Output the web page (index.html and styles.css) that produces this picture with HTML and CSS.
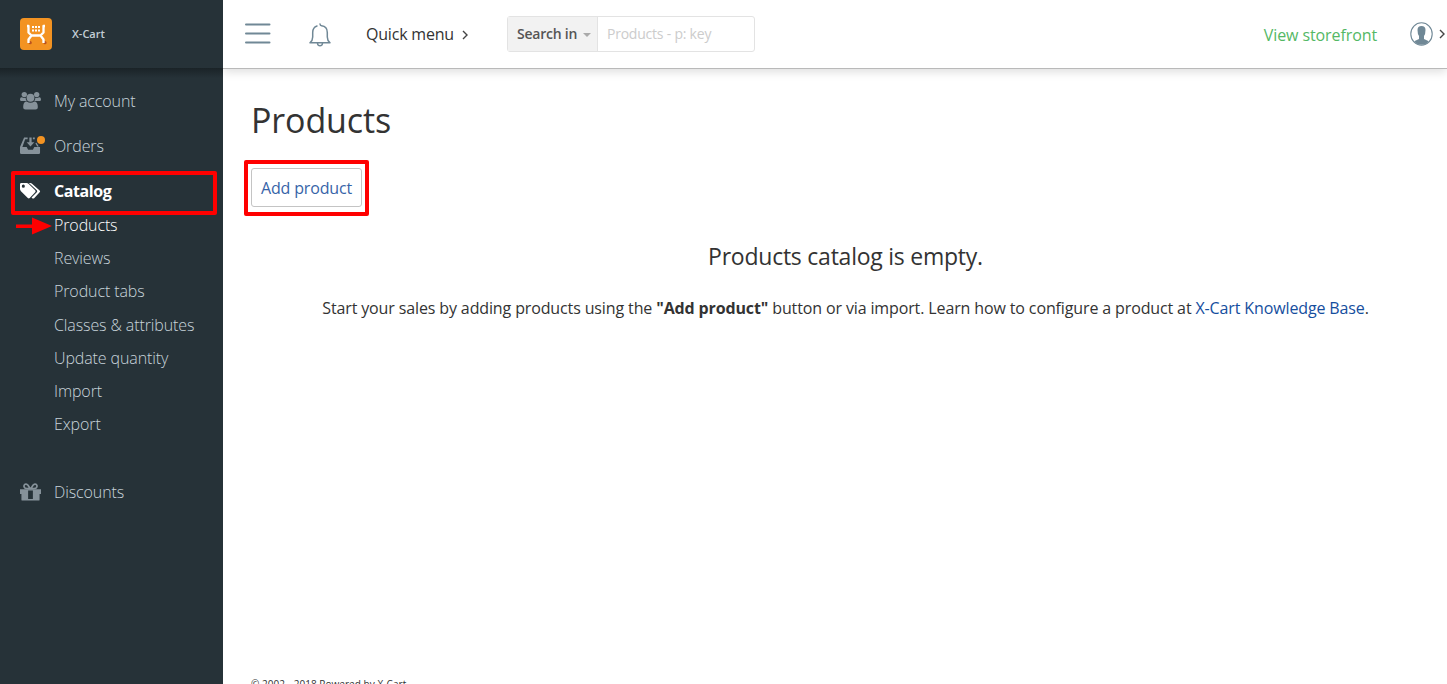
FILE: index.html
```html
<!DOCTYPE html>
<html lang="en">
<head>
<meta charset="utf-8">
<title>Products</title>
<link rel="stylesheet" href="styles.css">
</head>
<body>
<div class="app">
  <aside class="sidebar">
    <div class="brand">
      <svg class="logo" width="32" height="32" viewBox="0 0 32 32">
        <rect width="32" height="32" rx="4" fill="#f39322"/>
        <circle cx="10.200" cy="24.700" r="1.600" fill="#b9531f"/><circle cx="25" cy="24.700" r="1.600" fill="#b9531f"/>
        <path d="M7 8h1.500v6.500l3 3h9l3-3V8H25M8.500 25v-3.500l3-4h9l3 4V25" fill="none" stroke="#fff" stroke-width="2.300" stroke-linejoin="round"/>
        <path d="M12 8h2v2h-2zM15 8h2v2h-2zM18 8h2v2h-2zM12 11.500h2v2h-2zM15 11.500h2v2h-2zM18 11.500h2v2h-2z" fill="#fff"/>
      </svg>
      <span class="brand-name">X-Cart</span>
    </div>
    <nav class="nav">
      <a class="nav-item">
        <svg class="nav-icon" width="21" height="20" viewBox="0 0 22 20" fill="currentColor">
          <circle cx="4.500" cy="3.300" r="2.800"/><circle cx="17.500" cy="3.300" r="2.800"/>
          <path d="M0 8.500Q0 6 2 6.200Q4 7.200 6 6.500Q5.800 8.500 7 10H1Q0 10 0 8.500zM22 8.500Q22 6 20 6.200Q18 7.200 16 6.500Q16.200 8.500 15 10h6Q22 10 22 8.500z"/>
          <circle cx="11" cy="6.600" r="4.100"/>
          <path d="M3.300 16.500Q3.300 10.500 7 10.500Q11 13 15 10.500Q18.700 10.500 18.700 16.500Q18.700 19 16.300 19H5.700Q3.300 19 3.300 16.500z"/>
        </svg><span>My account</span></a>
      <a class="nav-item">
        <svg class="nav-icon" width="21" height="20" viewBox="0 0 22 20" fill="currentColor">
          <path d="M4.300 1.200H8v1.600H5.400L2.500 11H7l1.500 3h5l1.500-3h6v6q0 1.400-1.400 1.400H1.400Q0 18.400 0 17v-6z"/>
          <path d="M9.800 1h2.400v5H15l-4 4.500L7 6h2.800zM13.500 1.200h2V3h-2zM17.300 6.500l2.400 4h-1.600l-2-3.500z"/>
        </svg><i class="dot"></i><span>Orders</span></a>
      <a class="nav-item current">
        <svg class="nav-icon" width="21" height="20" viewBox="0 0 22 20" fill="currentColor">
          <path fill-rule="evenodd" d="M1.500 1.500H7q1 0 1.900.8l7 7q1 1 0 2l-5.700 6.100q-1 1-2 0l-7.200-7.200Q0 9.200 0 8V3q0-1.500 1.500-1.500zM3.500 3.300a1.600 1.600 0 1 0 0 3.200a1.600 1.600 0 0 0 0-3.200z"/>
          <path d="M9.300 1.500h1.500q1 0 1.800.8l8 7.100q1 1 0 2l-5.800 6.100q-.9.900-2 .1l-.7-.7l5.500-5.700q1-1.100 0-2.100z"/>
        </svg><span>Catalog</span></a>
      <div class="subnav">
        <a class="active">Products</a>
        <a>Reviews</a><a>Product tabs</a><a>Classes &amp; attributes</a><a>Update quantity</a><a>Import</a><a>Export</a>
      </div>
      <a class="nav-item">
        <svg class="nav-icon" width="21" height="20" viewBox="0 0 22 20" fill="currentColor">
          <path fill-rule="evenodd" d="M0 7h22v5h-1.500v6q0 1-1 1h-17q-1 0-1-1v-6H0zM8.500 8.300v9h5v-9z"/>
          <path d="M10.700 6.500L8.400 3Q7 1 5.200 2Q3.200 3.500 5 5.600Q6 6.500 10.700 6.500zM11.300 6.500L13.600 3Q15 1 16.800 2Q18.800 3.500 17 5.600Q16 6.500 11.300 6.500z" fill="none" stroke="currentColor" stroke-width="1.800"/>
        </svg><span>Discounts</span></a>
    </nav>
    <div class="mark mark-catalog"></div>
    <svg class="pointer" width="36" height="18" viewBox="0 0 36 18"><path d="M0 7.500h16V.5L36 9L16 17.500v-6.500H0z" fill="#f00"/></svg>
  </aside>
  <div class="page">
    <header class="topbar">
      <svg class="burger" width="26" height="22" viewBox="0 0 26 22"><path d="M1 1.500h23.500M1 10.500h23.500M1 19.500h23.500" stroke="#708896" stroke-width="2" stroke-linecap="round"/></svg>
      <svg class="bell" width="22" height="24" viewBox="0 0 22 24" fill="none" stroke="#708896" stroke-width="1.500" stroke-linecap="round" stroke-linejoin="round">
        <path d="M8 3Q3.700 4.500 3.700 9.500V14Q3.700 17.500 1 19.800H21Q18.300 17.500 18.300 14V9.500Q18.300 3.500 12.500 2.800Q11.200 2.700 11 1M8.500 20.500Q8.800 22.700 11 22.700Q13.200 22.700 13.500 20.500"/>
      </svg>
      <a class="quick">Quick menu</a>
      <svg class="chev" width="6" height="10" viewBox="0 0 6 10"><path d="M1 1l4 4l-4 4" fill="none" stroke="#444" stroke-width="1.400"/></svg>
      <div class="search">
        <div class="search-in"><span>Search in</span><i class="caret"></i></div>
        <div class="search-field">Products - p: key</div>
      </div>
      <a class="storefront">View storefront</a>
      <svg class="avatar" width="23" height="24" viewBox="0 0 23 24">
        <ellipse cx="11.500" cy="12" rx="10.700" ry="11.200" fill="#fff" stroke="#708896" stroke-width="1.100"/>
        <path d="M11.500 4Q15.500 4 15.500 8Q15.500 12 14 14V17L18.800 19.300Q16 22.800 11.500 22.800Q7 22.800 4.200 19.300L9 17V14Q7.500 12 7.500 8Q7.500 4 11.500 4z" fill="#708896"/>
      </svg>
      <svg class="chev-end" width="6" height="10" viewBox="0 0 6 10"><path d="M1 1l4 4l-4 4" fill="none" stroke="#444" stroke-width="1.400"/></svg>
    </header>
    <main class="content">
      <h1>Products</h1>
      <div class="actions"><button class="add">Add product</button><div class="mark mark-add"></div></div>
      <h2>Products catalog is empty.</h2>
      <p>Start your sales by adding products using the <b>"Add product"</b> button or via import. Learn how to configure a product at <a>X-Cart Knowledge Base</a>.</p>
    </main>
    <footer>© 2002 - 2018 Powered by X-Cart</footer>
  </div>
</div>
</body>
</html>
```
FILE: styles.css
```css
* { box-sizing: border-box; }
body { margin: 0; overflow: hidden; background: #fff; color: #333; font: 16px/22px "Open Sans", sans-serif; }
svg { flex: none; display: block; }
.app { display: flex; height: 684px; overflow: hidden; }
.sidebar { position: relative; flex: none; width: 223px; background: #263238; }
.brand { height: 68px; display: flex; align-items: center; padding-left: 20px; gap: 20px; color: #c3ced5; font-size: 11px; font-weight: 600; }
.nav { padding-top: 10px; height: 616px; background: linear-gradient(#1a2327, #263238 10px); letter-spacing: -.11px; }
.nav-item { position: relative; height: 45px; display: flex; align-items: center; padding-left: 20px; gap: 13px; color: #c8d4db; font-weight: 300; }
.nav-icon { color: #86929a; }
.current, .current .nav-icon { color: #fff; }
.current { font-weight: 700; letter-spacing: -.4px; }
.dot { position: absolute; left: 37px; top: 13px; width: 8px; height: 8px; border-radius: 50%; background: #f39322; }
.subnav { padding: 0 0 28px 54px; margin-top: -4px; }
.subnav a { display: block; height: 33.200px; line-height: 33.200px; color: #c8d4db; font-weight: 300; }
.subnav .active { color: #fff; }
.mark { position: absolute; border: 4px solid #f00; border-radius: 2px; }
.mark-catalog { left: 11px; top: 171px; width: 206px; height: 44px; }
.pointer { position: absolute; left: 16px; top: 217px; }
.page { flex: 1; min-width: 0; display: flex; flex-direction: column; }
.topbar { flex: none; height: 69px; display: flex; align-items: center; padding-left: 22px; border-bottom: 1px solid #b9b9b9; box-shadow: 0 3px 9px rgba(0,0,0,.13); clip-path: inset(0 0 -14px 0); }
.bell { margin: 1px 0 0 38px; }
.quick { margin-left: 35px; letter-spacing: -.2px; }
.chev { margin-left: 8px; margin-top: 1px; }
.search { margin-left: 39px; width: 248px; height: 36px; display: flex; border: 1px solid #e3e3e3; border-radius: 3px; font-size: 14px; line-height: 34px; letter-spacing: -.22px; }
.search-in { width: 90px; padding-left: 9px; display: flex; align-items: center; gap: 6px; background: #f2f2f2; border-right: 1px solid #e3e3e3; color: #555; font-weight: 600; white-space: nowrap; }
.caret { border: 4px solid transparent; border-top-color: #aaa; border-bottom: 0; margin-top: 2px; }
.search-field { padding-left: 9px; color: #ccc; }
.storefront { margin-left: auto; color: #54b865; padding-top: 2px; letter-spacing: -.1px; }
.avatar { margin-left: 33px; }
.chev-end { margin: 0 2px 0 6px; }
.content { flex: 1; padding: 26px 28px 0; }
h1 { margin: 0; font-size: 34px; line-height: 50px; font-weight: 400; letter-spacing: -.12px; }
.actions { position: relative; display: flex; margin-top: 23px; }
.add { width: 111px; height: 39px; padding: 0; border: 1px solid #c4c4c4; border-radius: 3px; background: #fff; color: #3764a8; font: 16px "Open Sans", sans-serif; letter-spacing: -.15px; }
.mark-add { left: -7px; top: -8px; width: 125px; height: 56px; }
h2 { margin: 32px 0 0; padding-left: 21px; font-size: 23px; line-height: 34px; font-weight: 400; text-align: center; letter-spacing: -.24px; }
p { margin: 24px 0 0; padding-left: 21px; text-align: center; white-space: nowrap; letter-spacing: -.128px; }
p a { color: #154e9e; }
footer { flex: none; height: 7px; padding-left: 28px; font-size: 10px; line-height: 14px; letter-spacing: .05px; }
```
